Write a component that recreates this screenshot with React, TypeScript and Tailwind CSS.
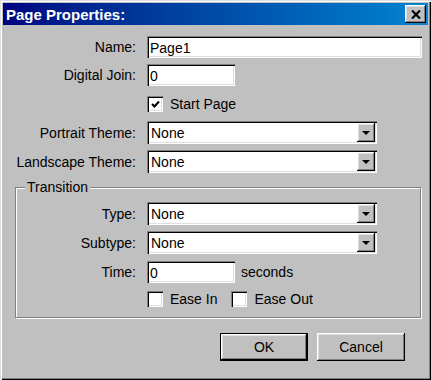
import type { ReactNode } from "react";

const sunken =
  "bg-white shadow-[inset_1px_1px_#808080,inset_2px_2px_#000,inset_-1px_-1px_#fff,inset_-2px_-2px_#dfdfdf]";
const raised =
  "bg-[#c0c0c0] shadow-[inset_-1px_-1px_#000,inset_1px_1px_#fff,inset_-2px_-2px_#808080,inset_2px_2px_#dfdfdf]";

const Row = ({ label, labelW, children }: { label?: string; labelW: string; children: ReactNode }) => (
  <div className="flex items-center">
    <span className={`${labelW} shrink-0 text-right`}>{label}</span>
    <div className="ml-[11px] flex items-center">{children}</div>
  </div>
);

const TextField = ({ value, w }: { value: string; w: string }) => (
  <input
    readOnly
    defaultValue={value}
    className={`${sunken} ${w} h-[22px] pl-[3px] pt-[1px] text-black outline-none`}
  />
);

const Select = ({ value }: { value: string }) => (
  <div className={`${sunken} w-[230px] h-[23px] flex items-center justify-between pl-[4px] pr-[2px]`}>
    <span>{value}</span>
    <div className={`${raised} w-[18px] h-[19px] flex items-center justify-center`}>
      <svg width="8" height="4" viewBox="0 0 8 4">
        <path d="M0 0h8L4 4z" fill="#000" />
      </svg>
    </div>
  </div>
);

const Check = ({ label, checked }: { label: string; checked?: boolean }) => (
  <div className="flex items-center">
    <div className={`${sunken} w-[16px] h-[16px] flex items-center justify-center`}>
      {checked && (
        <svg width="9" height="9" viewBox="0 0 9 9">
          <path d="M1 4l2.5 2.5L8 1.5" stroke="#000" strokeWidth="2" fill="none" />
        </svg>
      )}
    </div>
    <span className="ml-[7px]">{label}</span>
  </div>
);

export default function App() {
  return (
    <div
      className="w-[431px] h-[380px] bg-[#c0c0c0] p-[3px] flex flex-col text-[14px] leading-[16px] text-black shadow-[inset_1px_1px_#dfdfdf,inset_2px_2px_#fff,inset_-1px_-1px_#000,inset_-2px_-2px_#808080]"
      style={{ fontFamily: '"Liberation Sans", Arial, sans-serif' }}
    >
      {/* title bar */}
      <div className="h-[22px] shrink-0 bg-gradient-to-r from-[#000080] to-[#1084d0] flex items-center justify-between pl-[3px] pr-[2px]">
        <span className="text-white font-bold text-[15px] leading-none">Page Properties:</span>
        <div className={`${raised} w-[21px] h-[18px] flex items-center justify-center`}>
          <svg width="10" height="9" viewBox="0 0 10 9">
            <path d="M1 0.5l8 8M9 0.5l-8 8" stroke="#000" strokeWidth="2.2" />
          </svg>
        </div>
      </div>

      <div className="flex flex-col pt-[11px]">
        <Row label="Name:" labelW="w-[133px]">
          <TextField value="Page1" w="w-[275px]" />
        </Row>
        <div className="mt-[6px]">
          <Row label="Digital Join:" labelW="w-[133px]">
            <TextField value="0" w="w-[88px]" />
          </Row>
        </div>
        <div className="mt-[10px]">
          <Row labelW="w-[133px]">
            <Check label="Start Page" checked />
          </Row>
        </div>
        <div className="mt-[9px]">
          <Row label="Portrait Theme:" labelW="w-[133px]">
            <Select value="None" />
          </Row>
        </div>
        <div className="mt-[6px]">
          <Row label="Landscape Theme:" labelW="w-[133px]">
            <Select value="None" />
          </Row>
        </div>

        {/* Transition group */}
        <div className="relative mt-[14px] ml-[12px] w-[406px] border border-[#808080] shadow-[inset_1px_1px_#fff,1px_1px_#fff] pt-[14px] pb-[10px] pl-[1px]">
          <span className="absolute left-[9px] top-[-9px] bg-[#c0c0c0] px-[2px] leading-[16px]">Transition</span>
          <Row label="Type:" labelW="w-[119px]">
            <Select value="None" />
          </Row>
          <div className="mt-[6px]">
            <Row label="Subtype:" labelW="w-[119px]">
              <Select value="None" />
            </Row>
          </div>
          <div className="mt-[7px]">
            <Row label="Time:" labelW="w-[119px]">
              <TextField value="0" w="w-[88px]" />
              <span className="ml-[6px]">seconds</span>
            </Row>
          </div>
          <div className="mt-[8px]">
            <Row labelW="w-[119px]">
              <Check label="Ease In" />
              <div className="ml-[14px]">
                <Check label="Ease Out" />
              </div>
            </Row>
          </div>
        </div>

        {/* buttons */}
        <div className="flex justify-end gap-[9px] mt-[15px] pr-[23px]">
          <div className="w-[88px] h-[28px] border border-black bg-[#c0c0c0] shadow-[inset_-1px_-1px_#000,inset_1px_1px_#fff,inset_-2px_-2px_#808080,inset_2px_2px_#dfdfdf] flex items-center justify-center">
            OK
          </div>
          <div className={`${raised} w-[88px] h-[28px] flex items-center justify-center`}>Cancel</div>
        </div>
      </div>
    </div>
  );
}
